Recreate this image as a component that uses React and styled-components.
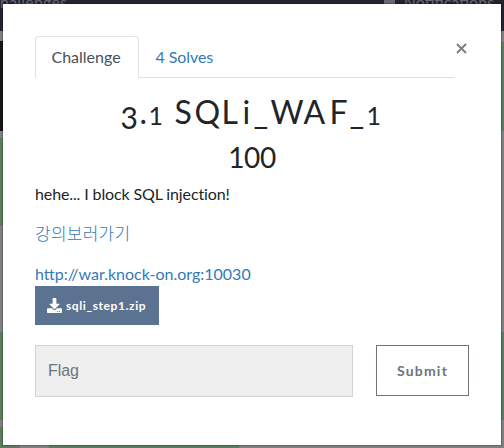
import React from 'react';
import styled, { createGlobalStyle } from 'styled-components';

const GlobalStyle = createGlobalStyle`
  *, *::before, *::after { box-sizing: border-box; }
  body {
    margin: 0;
    overflow: hidden;
    color: #212529;
    font: 16px/24px Lato, 'Noto Sans CJK KR', sans-serif;
  }
  a { color: #337ab7; text-decoration: none; }
`;

const Page = styled.div`
  position: relative;
  width: 504px;
  height: 448px;
  padding: 4px 3px 3px;
  overflow: hidden;
  background: #808080;
`;

const Backdrop = styled.div`
  position: absolute;
  inset: 0;
  display: grid;
  grid-template-rows: 31px 1fr 3px;
`;

const NavBar = styled.div`
  display: flex;
  justify-content: space-between;
  padding: 0 10px 0 0;
  overflow: hidden;
  background: #23232f;
  color: #686870;
  line-height: 20px;
`;

const NavItem = styled.span`
  display: flex;
  gap: 9px;
  margin-top: -8px;
  letter-spacing: ${(p) => p.$spacing || 0}px;
`;

const NavIcon = styled.span`
  width: 11px;
  height: 12px;
  background: #686870;
`;

const Board = styled.div`
  display: flex;
  justify-content: space-between;
`;

const Column = styled.div`
  width: 22px;
`;

const Tile = styled.div`
  height: ${(p) => p.$height}px;
  margin-top: ${(p) => p.$gap}px;
  background: ${(p) => (p.$dark ? '#14181b' : '#587c5c')};
`;

const BottomRow = styled.div`
  display: grid;
  grid-template-columns: 20px 190px;
  column-gap: 29px;
`;

const TileEdge = styled.div`
  background: #587c5c;
`;

const Modal = styled.main`
  position: relative;
  height: 441px;
  padding: 32px;
  background: #fff;
  box-shadow: 0 0 0 1px rgba(0, 0, 0, 0.2);
`;

const Header = styled.header`
  display: flex;
  height: 42px;
`;

const Tabs = styled.nav`
  display: flex;
  width: 420px;
  border-bottom: 1px solid #dee2e6;
`;

const Tab = styled.a`
  height: 42px;
  padding: 8px 15.5px;
  border: 1px solid transparent;
  border-radius: 4px 4px 0 0;
  letter-spacing: -0.08px;
  ${(p) => p.$active && `
    && { color: #495057; }
    width: 104px;
    border-color: #dee2e6 #dee2e6 #fff;
    background: #fff;
    letter-spacing: 0;
  `}
`;

const Close = styled.button`
  display: flex;
  width: 13px;
  height: 24px;
  padding: 7px 1px;
  border: 0;
  background: none;
`;

const Title = styled.h2`
  display: flex;
  justify-content: center;
  height: 39px;
  margin: 15px 0 0;
  font-weight: 400;
  font-size: 32px;
  line-height: 38px;
`;

const Glyph = styled.span`
  width: ${(p) => p.$w}px;
`;

const OldStyleDigit = styled(Glyph)`
  padding-top: ${(p) => p.$drop}px;
  font-size: ${(p) => p.$size}px;
`;

const Score = styled.h3`
  margin: 8px 0;
  font-weight: 400;
  font-size: 28px;
  line-height: 34px;
  letter-spacing: -0.4px;
  text-align: center;
`;

const Description = styled.p`
  margin: 0 0 16px;
  letter-spacing: -0.12px;
`;

const KoreanLink = styled.a`
  font-family: 'Noto Sans CJK KR', sans-serif;
  font-weight: 300;
  font-size: 17px;
  line-height: 17px;
  letter-spacing: 0.25px;
`;

const LinkLine = styled.p`
  margin: 0;
`;

const Download = styled.button`
  display: flex;
  align-items: center;
  gap: 4px;
  width: 124px;
  height: 39px;
  padding: 0 12px;
  border: 0;
  background: #5b7290;
  color: #fff;
  font: 700 12px/18px Lato, sans-serif;
  letter-spacing: 0.6px;
  svg { flex-shrink: 0; }
`;

const Form = styled.form`
  display: flex;
  gap: 23px;
  margin-top: 20px;
`;

const FlagInput = styled.input`
  width: 318px;
  height: 52px;
  padding: 0 12px;
  border: 1px solid #ced4da;
  border-radius: 0;
  background: #efefef;
  font: 16px 'Liberation Sans', sans-serif;
  letter-spacing: -0.1px;
  &::placeholder { color: #6c757d; }
`;

const Submit = styled.button`
  width: 93px;
  height: 51px;
  padding: 0;
  border: 1px solid #6c757d;
  background: #fff;
  color: #6c757d;
  font: 700 14px Lato, sans-serif;
  letter-spacing: 1.2px;
`;

const three = { size: 30, drop: 5 };
const one = { size: 25, drop: 3 };

const titleGlyphs = [
  ['3', 19, three], ['.', 9], ['1', 26, one], ['S', 20], ['Q', 27], ['L', 21],
  ['i', 11], ['_', 17], ['W', 33], ['A', 26], ['F', 20], ['_', 17], ['1', 17, one],
];

export default function App() {
  return (
    <Page>
      <GlobalStyle />
      <Backdrop>
        <NavBar>
          <NavItem $spacing={0.2}>hallenges</NavItem>
          <NavItem><NavIcon />Notifications</NavItem>
        </NavBar>
        <Board>
          <Column>
            <Tile $dark $gap={10} $height={90} />
            <Tile $gap={7} $height={88} />
            <Tile $gap={106} $height={88} />
            <Tile $gap={7} $height={18} />
          </Column>
          <Column>
            <Tile $gap={11} $height={89} />
            <Tile $gap={201} $height={88} />
          </Column>
        </Board>
        <BottomRow><TileEdge /><TileEdge /></BottomRow>
      </Backdrop>
      <Modal>
        <Header>
          <Tabs>
            <Tab $active>Challenge</Tab>
            <Tab>4 Solves</Tab>
          </Tabs>
          <Close aria-label="Close">
            <svg width="11" height="11" viewBox="0 0 11 11" stroke="#7f7f7f" strokeWidth="2">
              <path d="M1 1L10 10M10 1L1 10" />
            </svg>
          </Close>
        </Header>
        <Title>
          {titleGlyphs.map(([char, w, digit], i) =>
            digit
              ? <OldStyleDigit key={i} $w={w} $size={digit.size} $drop={digit.drop}>{char}</OldStyleDigit>
              : <Glyph key={i} $w={w}>{char}</Glyph>
          )}
        </Title>
        <Score>100</Score>
        <Description>hehe... I block SQL injection!</Description>
        <Description><KoreanLink>강의보러가기</KoreanLink></Description>
        <LinkLine><a>http://war.knock-on.org:10030</a></LinkLine>
        <Download>
          <svg width="15" height="15" viewBox="0 0 512 512" fill="currentColor">
            <path d="M216 0h80c13 0 24 11 24 24v168h88c18 0 27 21 14 34L270 378c-8 8-20 8-28 0L90 226c-13-13-4-34 14-34h88V24c0-13 11-24 24-24zm296 376v112c0 13-11 24-24 24H24c-13 0-24-11-24-24V376c0-13 11-24 24-24h147l49 49c20 20 52 20 72 0l49-49h147c13 0 24 11 24 24zm-124 88c0-11-9-20-20-20s-20 9-20 20 9 20 20 20 20-9 20-20zm64 0c0-11-9-20-20-20s-20 9-20 20 9 20 20 20 20-9 20-20z" />
          </svg>
          sqli_step1.zip
        </Download>
        <Form>
          <FlagInput placeholder="Flag" />
          <Submit type="button">Submit</Submit>
        </Form>
      </Modal>
    </Page>
  );
}
